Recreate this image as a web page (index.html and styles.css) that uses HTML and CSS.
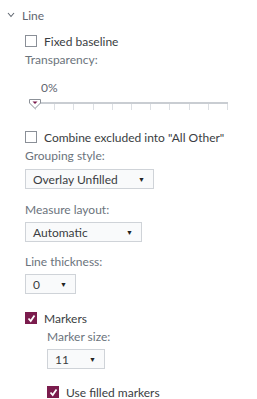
FILE: index.html
```html
<!DOCTYPE html>
<html lang="en">
<head>
    <meta charset="UTF-8">
    <title>Line options</title>
    <link rel="stylesheet" href="styles.css">
</head>
<body>
    <div class="section-head">
        <svg class="chevron" width="8" height="6" viewBox="0 0 8 6"><polyline points="1,1 4,4.5 7,1" fill="none" stroke="#5f6670" stroke-width="1.1"/></svg>
        <span>Line</span>
    </div>
    <div class="section-body">
        <div class="check row-fixed">
            <span class="box"></span>
            <span>Fixed baseline</span>
        </div>
        <div class="label">Transparency:</div>
        <div class="slider">
            <div class="slider-value">0%</div>
            <div class="slider-track">
                <div class="rail"></div>
                <div class="ticks">
                    <span></span><span></span><span></span><span></span><span></span><span></span>
                    <span></span><span></span><span></span><span></span><span></span>
                </div>
                <svg class="thumb" width="14" height="12" viewBox="0 0 14 12">
                    <path d="M1.5,1.5 H12.5 V5 L7,10.5 L1.5,5 Z" fill="#fff" stroke="#8c9198" stroke-width="1"/>
                    <path d="M4.5,3.5 H9.5 L7,6 Z" fill="#7b1c4d"/>
                </svg>
            </div>
        </div>
        <div class="check row-combine">
            <span class="box"></span>
            <span>Combine excluded into "All Other"</span>
        </div>
        <div class="label">Grouping style:</div>
        <div class="select first w-overlay"><span>Overlay Unfilled</span><span class="caret">▼</span></div>
        <div class="label gap-measure">Measure layout:</div>
        <div class="select w-measure"><span>Automatic</span><span class="caret">▼</span></div>
        <div class="label gap-thick">Line thickness:</div>
        <div class="select w-thick"><span>0</span><span class="caret">▼</span></div>
        <div class="check row-markers">
            <span class="box checked"><svg width="9" height="9" viewBox="0 0 9 9"><polyline points="1.5,4.5 3.7,7 7.5,1.5" fill="none" stroke="#fff" stroke-width="1.8"/></svg></span>
            <span>Markers</span>
        </div>
        <div class="sub">
            <div class="label">Marker size:</div>
            <div class="select w-size"><span>11</span><span class="caret">▼</span></div>
            <div class="check row-filled">
                <span class="box checked"><svg width="9" height="9" viewBox="0 0 9 9"><polyline points="1.5,4.5 3.7,7 7.5,1.5" fill="none" stroke="#fff" stroke-width="1.8"/></svg></span>
                <span>Use filled markers</span>
            </div>
        </div>
    </div>
</body>
</html>
```

FILE: styles.css
```css
body {
    margin: 0;
    background-color: white;
    font-family: Lato, "Open Sans", sans-serif;
    font-size: 12px;
    color: #3a3d42;
}
.section-head {
    display: flex;
    align-items: center;
    height: 30px;
    padding-left: 7px;
    color: #5f6670;
}
.chevron {
    margin-right: 7px;
}
.section-body {
    padding-left: 25px;
}
.check {
    display: flex;
    align-items: center;
    height: 20px;
}
.box {
    display: flex;
    align-items: center;
    justify-content: center;
    width: 10px;
    height: 10px;
    border: 1px solid #8a8f97;
    margin-right: 7px;
    background-color: white;
}
.box.checked {
    background-color: #7b1c4d;
    border-color: #7b1c4d;
}
.row-fixed {
    margin-top: 1px;
}
.label {
    height: 18px;
    line-height: 18px;
    color: #6b737c;
}
.slider {
    box-sizing: border-box;
    height: 44px;
    padding-top: 11px;
}
.slider-value {
    margin-left: 16px;
    height: 16px;
    line-height: 16px;
    color: #5f6670;
}
.slider-track {
    position: relative;
    width: 193px;
    margin-left: 10px;
    margin-top: 6px;
    height: 14px;
}
.rail {
    height: 2px;
    background-color: #c9cdd2;
    margin-top: 2px;
}
.ticks {
    display: flex;
    justify-content: space-between;
}
.ticks span {
    width: 1px;
    height: 6px;
    background-color: #dcdfe3;
}
.thumb {
    position: absolute;
    left: -7px;
    top: -4px;
}
.row-combine {
    margin-top: 14px;
}
.select {
    display: flex;
    align-items: center;
    justify-content: space-between;
    box-sizing: border-box;
    height: 20px;
    margin-top: 3px;
    padding: 0 8px 0 7px;
    border: 1px solid #cfd3d8;
    background-color: #f9fafb;
    color: #3a3d42;
}
.select.first {
    margin-top: 4px;
}
.caret {
    font-size: 7px;
    color: #222;
}
.w-overlay {
    width: 129px;
}
.w-measure {
    width: 117px;
}
.w-thick {
    width: 51px;
}
.w-size {
    width: 58px;
}
.gap-measure {
    margin-top: 12px;
}
.gap-thick {
    margin-top: 11px;
}
.row-markers {
    margin-top: 14px;
}
.sub {
    padding-left: 22px;
}
.row-filled {
    margin-top: 13px;
}
```
